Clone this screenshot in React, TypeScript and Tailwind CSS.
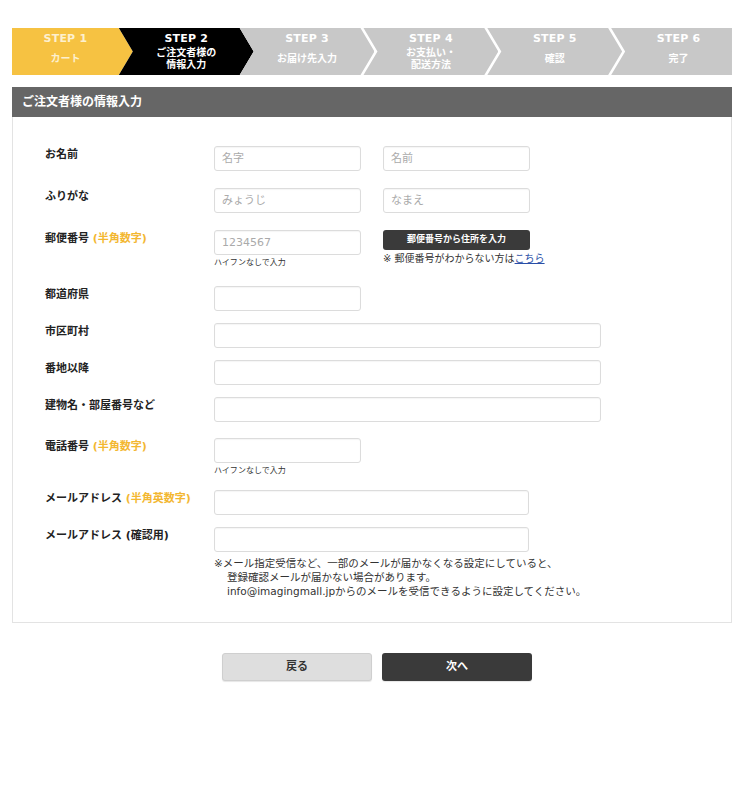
import React from "react";

const steps = [
  { no: "STEP 1", title: ["カート"], bg: "bg-[#f6c242]", text: "text-[#fdf0cf]" },
  { no: "STEP 2", title: ["ご注文者様の", "情報入力"], bg: "bg-black", text: "text-white" },
  { no: "STEP 3", title: ["お届け先入力"], bg: "bg-[#c8c8c8]", text: "text-white" },
  { no: "STEP 4", title: ["お支払い・", "配送方法"], bg: "bg-[#c8c8c8]", text: "text-white" },
  { no: "STEP 5", title: ["確認"], bg: "bg-[#c8c8c8]", text: "text-white" },
  { no: "STEP 6", title: ["完了"], bg: "bg-[#c8c8c8]", text: "text-white" },
];

function Steps() {
  return (
    <div className="flex h-[47px]">
      {steps.map((s, i) => {
        const clip =
          i === 0
            ? "[clip-path:polygon(0_0,calc(100%_-_14px)_0,100%_50%,calc(100%_-_14px)_100%,0_100%)]"
            : i === steps.length - 1
            ? "[clip-path:polygon(0_0,100%_0,100%_100%,0_100%,14px_50%)]"
            : "[clip-path:polygon(0_0,calc(100%_-_14px)_0,100%_50%,calc(100%_-_14px)_100%,0_100%,14px_50%)]";
        // gray-to-gray joins leave a thin white chevron
        const overlap = i === 0 ? "" : i <= 2 ? "-ml-[14px]" : "-ml-[11px]";
        return (
          <div
            key={s.no}
            className={`flex-1 flex flex-col items-center ${s.bg} ${s.text} ${clip} ${overlap} ${i === 0 ? "pr-[14px]" : i === steps.length - 1 ? "pl-[14px]" : "px-[14px]"}`}
          >
            <div className="pt-[4px] text-[11px] font-bold leading-[13px] tracking-[0.2px]">{s.no}</div>
            <div className="flex-1 flex flex-col justify-center pb-[3px] text-[10px] font-bold leading-[12px] text-center">
              {s.title.map((t) => (
                <div key={t}>{t}</div>
              ))}
            </div>
          </div>
        );
      })}
    </div>
  );
}

function Input({ w = "w-[147px]", ph = "" }: { w?: string; ph?: string }) {
  return (
    <input
      placeholder={ph}
      className={`${w} block h-[25px] rounded-[3px] border border-[#dcdcdc] bg-white px-[7px] text-[11px] text-[#333] placeholder:text-[#aaa] shadow-[inset_0_1px_1px_rgba(0,0,0,0.04)] outline-none`}
    />
  );
}

function Label({ text, sub }: { text: string; sub?: string }) {
  return (
    <div className="w-[169px] shrink-0 pt-[1px] text-[11px] font-bold leading-[15px] text-[#222]">
      {text}
      {sub && <span className="text-[#f3b731]">{sub}</span>}
    </div>
  );
}

function Row({ mt, children }: { mt: string; children: React.ReactNode }) {
  return <div className={`flex items-start ${mt}`}>{children}</div>;
}

function Hint() {
  return <div className="mt-[3px] text-[8px] leading-[10px] text-[#333]">ハイフンなしで入力</div>;
}

export default function App() {
  return (
    <div className="min-h-[792px] bg-white text-[#333] [font-family:'DejaVu_Sans','Noto_Sans_CJK_JP',sans-serif]">
      <div className="ml-[12px] w-[720px] pt-[28px]">
        <Steps />

        <div className="mt-[12px] flex h-[30px] items-center bg-[#666] px-[10px] text-[12px] font-bold text-white">
          ご注文者様の情報入力
        </div>

        <div className="border border-t-0 border-[#e3e3e3] pl-[32px] pt-[29px] pb-[24px]">
          <Row mt="mt-0">
            <Label text="お名前" />
            <div className="flex gap-[22px]">
              <Input ph="名字" />
              <Input ph="名前" />
            </div>
          </Row>
          <Row mt="mt-[17px]">
            <Label text="ふりがな" />
            <div className="flex gap-[22px]">
              <Input ph="みょうじ" />
              <Input ph="なまえ" />
            </div>
          </Row>
          <Row mt="mt-[17px]">
            <Label text="郵便番号 " sub="(半角数字)" />
            <div className="flex items-start gap-[22px]">
              <div>
                <Input ph="1234567" />
                <Hint />
              </div>
              <div>
                <button className="block h-[20px] w-[147px] rounded-[3px] bg-[#3a3a3a] text-[9px] font-bold text-white">
                  郵便番号から住所を入力
                </button>
                <div className="mt-[2px] text-[10px] leading-[14px] text-[#333]">
                  ※ 郵便番号がわからない方は<span className="text-[#2a4fa8] underline">こちら</span>
                </div>
              </div>
            </div>
          </Row>
          <Row mt="mt-[18px]">
            <Label text="都道府県" />
            <Input />
          </Row>
          <Row mt="mt-[12px]">
            <Label text="市区町村" />
            <Input w="w-[387px]" />
          </Row>
          <Row mt="mt-[12px]">
            <Label text="番地以降" />
            <Input w="w-[387px]" />
          </Row>
          <Row mt="mt-[12px]">
            <Label text="建物名・部屋番号など" />
            <Input w="w-[387px]" />
          </Row>
          <Row mt="mt-[16px]">
            <Label text="電話番号 " sub="(半角数字)" />
            <div>
              <Input />
              <Hint />
            </div>
          </Row>
          <Row mt="mt-[14px]">
            <Label text="メールアドレス " sub="(半角英数字)" />
            <Input w="w-[315px]" />
          </Row>
          <Row mt="mt-[12px]">
            <Label text="メールアドレス (確認用)" />
            <div>
              <Input w="w-[315px]" />
              <div className="mt-[4px] text-[10.5px] leading-[14px] text-[#333]">
                <div>※メール指定受信など、一部のメールが届かなくなる設定にしていると、</div>
                <div className="pl-[13px]">登録確認メールが届かない場合があります。</div>
                <div className="pl-[13px]">info@imagingmall.jpからのメールを受信できるように設定してください。</div>
              </div>
            </div>
          </Row>
        </div>

        <div className="mt-[30px] flex justify-center gap-[10px] pl-[10px]">
          <button className="h-[28px] w-[150px] rounded-[3px] border border-[#cfcfcf] bg-[#dedede] text-[11px] font-bold text-[#333] shadow-[0_1px_1px_rgba(0,0,0,0.1)]">
            戻る
          </button>
          <button className="h-[28px] w-[150px] rounded-[3px] bg-[#3a3a3a] text-[11px] font-bold text-white shadow-[0_1px_1px_rgba(0,0,0,0.1)]">
            次へ
          </button>
        </div>
      </div>
    </div>
  );
}
